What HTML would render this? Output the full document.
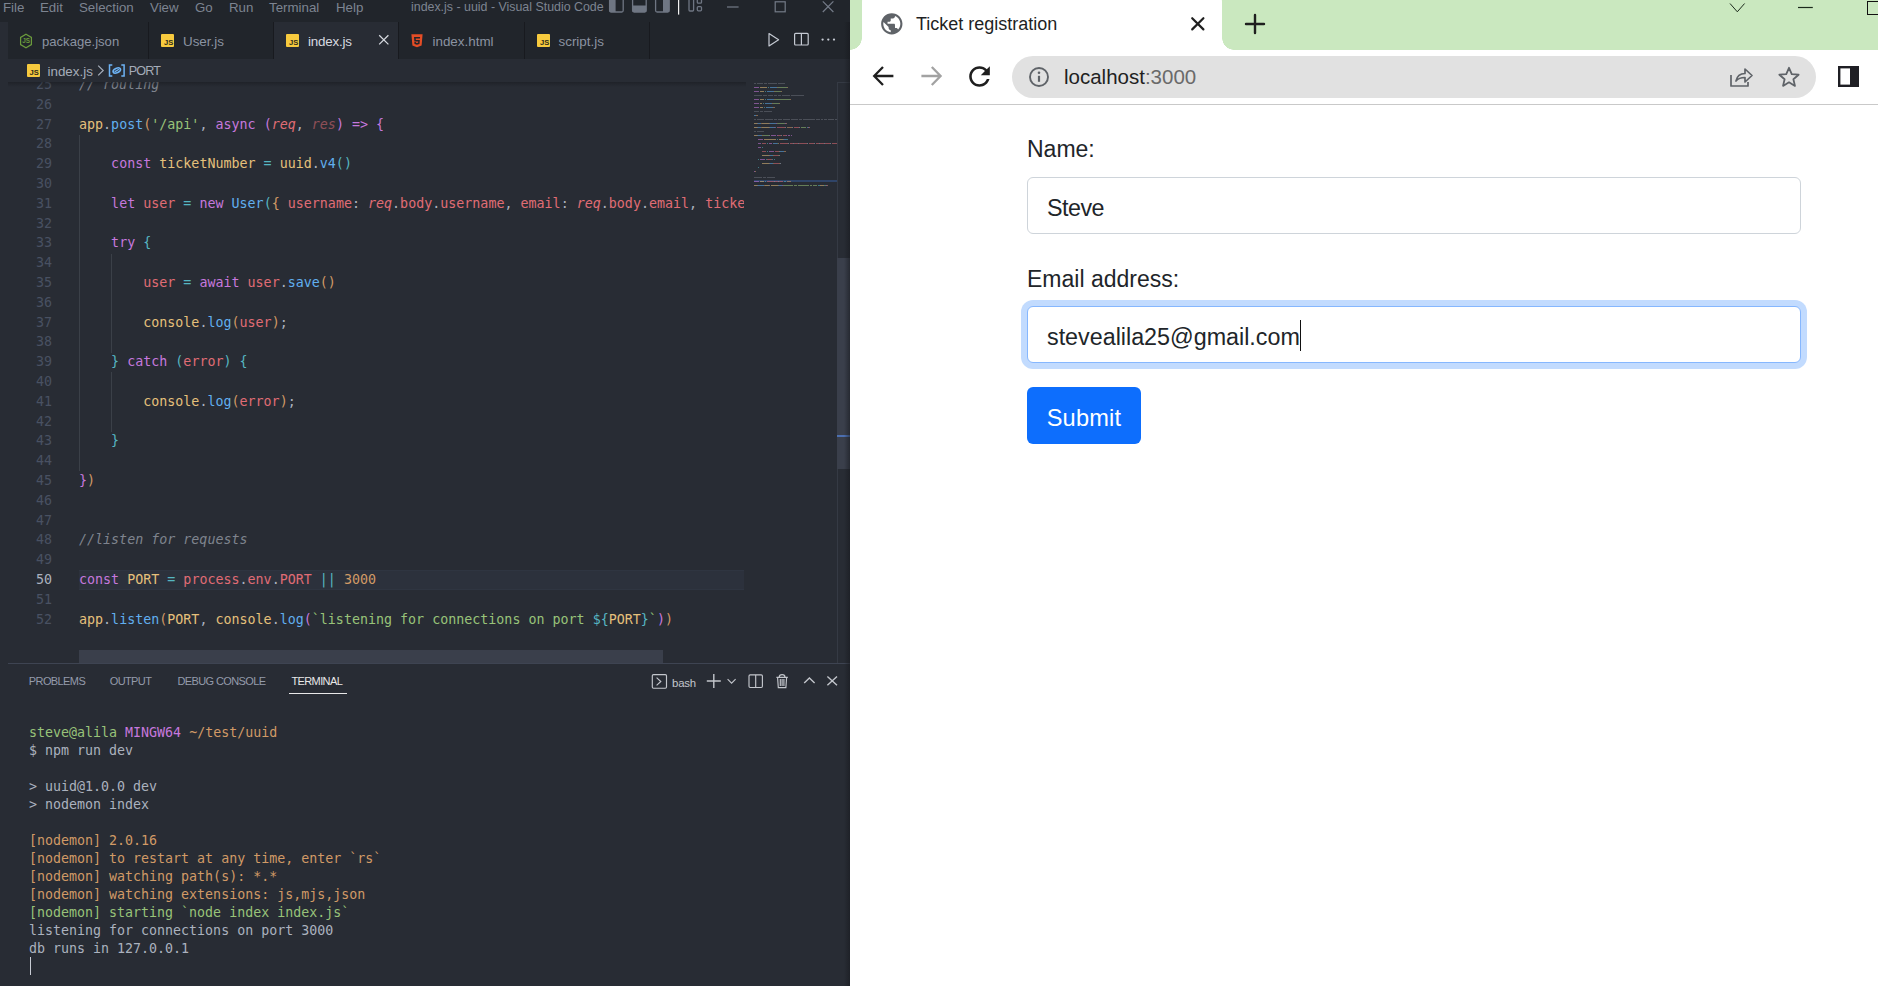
<!DOCTYPE html>
<html lang="en">
<head>
<meta charset="utf-8">
<title>Ticket registration</title>
<style>
*{box-sizing:border-box;margin:0;padding:0}
html,body{width:1878px;height:986px;overflow:hidden;background:#fff}
body{position:relative;font-family:"Liberation Sans",sans-serif}
.abs{position:absolute}
/* ---------- VS Code ---------- */
#vsc{position:absolute;left:0;top:0;width:850px;height:986px;background:#282c34;overflow:hidden;color:#abb2bf}
#titlebar{position:absolute;left:0;top:0;width:850px;height:22px;background:#21252b}
#titlebar .mi{position:absolute;top:0px;font-size:13.3px;line-height:16px;color:#7d8491;white-space:nowrap}
#wtitle{position:absolute;left:411px;top:-1px;font-size:12.4px;line-height:16px;color:#7d8491;white-space:nowrap}
#tabs{position:absolute;left:8px;top:22px;width:842px;height:37px;background:#21252b}
.tab{position:absolute;top:0;height:37px;border-right:1px solid #181a1f;font-size:13.4px;color:#8b93a1;white-space:nowrap}
.tab.active{background:#282c34;color:#d7dae0}
.tab .lbl{position:absolute;top:10.6px;line-height:17px}
.jsic{position:absolute;width:13px;height:13px;background:#f7ca3e;border-radius:1px;overflow:hidden}
.jsic span{position:absolute;right:1px;bottom:-0.2px;font-size:7.6px;line-height:8px;font-weight:bold;color:#2e2a1c;letter-spacing:-0.2px}
#crumbs{position:absolute;left:8px;top:59px;width:842px;height:23px;background:#282c34;font-size:13.4px;color:#a5acb9;white-space:nowrap}
/* editor */
#editor{position:absolute;left:8px;top:82px;width:842px;height:581px;overflow:hidden;background:#282c34}
.ln{position:absolute;left:0;width:44px;text-align:right;height:19.8px;line-height:19.8px;color:#495162;font-family:"DejaVu Sans Mono","Liberation Mono",monospace;font-size:13.34px;white-space:pre}
.cl{position:absolute;left:71px;height:19.8px;line-height:19.8px;font-family:"DejaVu Sans Mono","Liberation Mono",monospace;font-size:13.34px;white-space:pre;color:#abb2bf}
.k{color:#c678dd}.v{color:#e5c07b}.f{color:#61afef}.s{color:#98c379}.r{color:#e06c75}.o{color:#56b6c2}.n{color:#d19a66}
.c{color:#7f848e;font-style:italic}.i{font-style:italic}
.b1{color:#d19a66}.b2{color:#c678dd}.b3{color:#56b6c2}
.guide{position:absolute;width:1px;background:#3b4048}
/* panel */
#panel{position:absolute;left:8px;top:663px;width:842px;height:323px;background:#282c34;border-top:1px solid #3e4452}
.pt{position:absolute;top:10.4px;font-size:11px;line-height:14px;letter-spacing:-0.6px;color:#949bab;white-space:nowrap}
.tl{position:absolute;left:21px;height:18px;line-height:18px;font-family:"DejaVu Sans Mono","Liberation Mono",monospace;font-size:13.3px;white-space:pre;color:#abb2bf}
.tg{color:#98c379}.tm{color:#c678dd}.ty{color:#d19a66}
/* ---------- Chrome ---------- */
#chrome{position:absolute;left:850px;top:0;width:1028px;height:986px;background:#fff;overflow:hidden}
#strip{position:absolute;left:0;top:0;width:1028px;height:50px;background:#cae8bf;z-index:2}
#ctab{position:absolute;left:12px;top:-10px;width:360px;height:60px;background:#fff;border-radius:12px 12px 0 0}
#ctab:before,#ctab:after{content:"";position:absolute;bottom:0;width:12px;height:12px}
#ctab:before{left:-12px;background:radial-gradient(circle at 0 0,rgba(255,255,255,0) 11.5px,#fff 12px)}
#ctab:after{right:-12px;background:radial-gradient(circle at 100% 0,rgba(255,255,255,0) 11.5px,#fff 12px)}
#ctitle{position:absolute;left:54px;top:23px;font-size:18px;line-height:22px;color:#1f1f24;white-space:nowrap}
#toolbar{position:absolute;left:0;top:49px;width:1028px;height:56px;background:#fff;border-bottom:1px solid #c9c9c9}
#omni{position:absolute;left:162px;top:7px;width:804px;height:42px;border-radius:21px;background:#e1e1e1}
#url{position:absolute;left:52px;top:8px;font-size:20.5px;line-height:26px;color:#1f1f1f;white-space:nowrap}
#url span{color:#6a6a6a}
/* page */
#page{position:absolute;left:0;top:105px;width:1028px;height:881px;background:#fff;color:#212529}
.lab{position:absolute;left:177px;font-size:23px;line-height:28px;white-space:nowrap}
.inp{position:absolute;left:177px;width:774px;height:57px;border:1px solid #ced4da;border-radius:6px;background:#fff;font-size:23.3px;line-height:60px;padding-left:19px;white-space:nowrap}
.inp.focus{border-color:#86b7fe;box-shadow:0 0 0 6px rgba(13,110,253,.25)}
#btn{position:absolute;left:177px;top:282px;width:114px;height:57px;border-radius:6px;background:#0d6efd;color:#fff;font-size:23.6px;line-height:62px;text-align:center;letter-spacing:0.2px}
</style>
</head>
<body>
<div id="vsc">
  <div id="titlebar">
    <span class="mi" style="left:3px">File</span>
    <span class="mi" style="left:40px">Edit</span>
    <span class="mi" style="left:79px">Selection</span>
    <span class="mi" style="left:150px">View</span>
    <span class="mi" style="left:195px">Go</span>
    <span class="mi" style="left:229px">Run</span>
    <span class="mi" style="left:269px">Terminal</span>
    <span class="mi" style="left:336px">Help</span>
    <span id="wtitle">index.js - uuid - Visual Studio Code</span>
    <svg class="abs" style="left:606px;top:0" width="244" height="22" viewBox="0 0 244 22">
      <g fill="none" stroke="#6f7683" stroke-width="1.3">
        <rect x="3.6" y="-3" width="13.6" height="15" rx="1.5"/>
        <rect x="26.6" y="-3" width="13.6" height="15" rx="1.5"/>
        <rect x="49.6" y="-3" width="13.6" height="15" rx="1.5"/>
        <rect x="83" y="-3" width="4.6" height="14" rx="1"/>
        <rect x="91.3" y="-1" width="4.2" height="4.2" rx="1"/>
        <rect x="91.3" y="6.6" width="4.2" height="4.2" rx="1"/>
      </g>
      <g fill="#6f7683">
        <rect x="3.6" y="-3" width="6" height="15"/>
        <rect x="26.6" y="5.5" width="13.6" height="6.5"/>
        <rect x="57" y="-3" width="6.2" height="15"/>
      </g>
      <rect x="72" y="0" width="1.2" height="14.6" fill="#f2f2f2"/>
      <g fill="none" stroke="#747b88" stroke-width="1.2">
        <path d="M121 7h11.6"/>
        <rect x="169.2" y="1.8" width="10" height="10"/>
        <path d="M216.8 1.4l10.6 10.6M227.4 1.4l-10.6 10.6"/>
      </g>
    </svg>
  </div>
  <div id="tabs">
    <div class="tab" style="left:0;width:141px">
      <svg class="abs" style="left:11px;top:10.5px" width="14" height="16" viewBox="0 0 14 16"><path d="M7 1.300l5.400 3.100v7.200L7 14.700l-5.400-3.100V4.400z" fill="none" stroke="#6a9a3c" stroke-width="1.250"/><text x="7.100" y="10.300" font-size="6.400" font-weight="bold" font-family="Liberation Sans,sans-serif" text-anchor="middle" fill="#6a9a3c">JS</text></svg>
      <span class="lbl" style="left:34px;font-size:13.1px">package.json</span>
    </div>
    <div class="tab" style="left:141px;width:125px">
      <div class="jsic" style="left:12px;top:12px"><span>JS</span></div>
      <span class="lbl" style="left:34px">User.js</span>
    </div>
    <div class="tab active" style="left:266px;width:125px">
      <div class="jsic" style="left:12px;top:12px"><span>JS</span></div>
      <span class="lbl" style="left:34px;letter-spacing:-0.2px">index.js</span>
      <svg class="abs" style="left:104px;top:11.700px" width="12" height="12" viewBox="0 0 12 12"><path d="M1.2 1.2l9.2 9.2M10.4 1.2l-9.2 9.2" stroke="#d7dae0" stroke-width="1.25" fill="none"/></svg>
    </div>
    <div class="tab" style="left:391px;width:126px">
      <svg class="abs" style="left:12px;top:11.500px" width="12" height="14" viewBox="0 0 12 14"><path d="M0.4 0.3h11.2l-1 11.3L6 13.3 1.4 11.6z" fill="#e44d26"/><path d="M3 2.9h6.1l-.15 1.6H4.7l.12 1.5h4l-.33 3.9L6 10.7l-2.5-.8-.15-1.9h1.5l.08.8L6 9.1l1.08-.3.12-1.4H3.4z" fill="#21252b"/></svg>
      <span class="lbl" style="left:33.500px">index.html</span>
    </div>
    <div class="tab" style="left:517px;width:125px">
      <div class="jsic" style="left:12px;top:12px"><span>JS</span></div>
      <span class="lbl" style="left:33.500px">script.js</span>
    </div>
    <svg class="abs" style="left:756px;top:9px" width="80" height="20" viewBox="0 0 80 20">
      <g fill="none" stroke="#c5cad3" stroke-width="1.2" stroke-linejoin="round">
        <path d="M5 2.6v12.4l9.6-6.2z"/>
        <rect x="30.6" y="2.4" width="13.6" height="11.6" rx="1"/>
        <path d="M37.4 2.4v11.6"/>
      </g>
      <g fill="#c5cad3"><circle cx="58.6" cy="8.6" r="1.15"/><circle cx="64.3" cy="8.6" r="1.15"/><circle cx="70" cy="8.6" r="1.15"/></g>
    </svg>
  </div>
  <div id="crumbs">
    <div class="jsic" style="left:18.5px;top:4.5px"><span>JS</span></div>
    <span class="abs" style="left:39.5px;top:3.5px;line-height:17px">index.js</span>
    <svg class="abs" style="left:87.6px;top:5px" width="10" height="13" viewBox="0 0 10 13"><path d="M2.2 1.6l5 4.9-5 4.9" fill="none" stroke="#a5acb9" stroke-width="1.2"/></svg>
    <svg class="abs" style="left:100px;top:4.500px" width="18" height="13" viewBox="0 0 18 13"><g fill="none" stroke="#6db3f5" stroke-width="1.500"><path d="M4.300 1.100H1.500v10.800h2.800M13.300 1.100h2.800v10.800h-2.800"/><ellipse cx="8.800" cy="6.500" rx="3.900" ry="2.300" transform="rotate(-24 8.800 6.500)" stroke-width="1.600"/><path d="M6.600 7.900l4.400-2.700" stroke-width="1.300"/></g></svg>
    <span class="abs" style="left:120.7px;top:3.5px;line-height:17px;font-size:12.6px;letter-spacing:-0.85px">PORT</span>
  </div>
  <div id="editor"><!--ED-->
<div class="abs" style="left:0;top:0;width:736px;height:581px;overflow:hidden">
<div class="abs" style="left:71px;top:488.1px;width:665px;height:19.8px;background:#2c313c;border-top:1px solid #2f3541;border-bottom:1px solid #2f3541"></div>
<div class="guide" style="left:71px;top:52.7px;height:336.6px;background:#3b4048"></div>
<div class="guide" style="left:103px;top:171.5px;height:99.0px;background:#3b4048"></div>
<div class="guide" style="left:103px;top:290.3px;height:59.4px;background:#3b4048"></div>
<div class="ln" style="top:-7.0px">25</div>
<div class="cl" style="top:-7.0px"><span class="c">// routing</span></div>
<div class="ln" style="top:12.8px">26</div>
<div class="ln" style="top:32.6px">27</div>
<div class="cl" style="top:32.6px"><span class="v">app</span>.<span class="f">post</span><span class="b1">(</span><span class="s">'/api'</span>, <span class="k">async</span> <span class="b2">(</span><span class="r i">req</span>, <span class="r i" style="opacity:.55">res</span><span class="b2">)</span> <span class="k">=&gt;</span> <span class="b2">{</span></div>
<div class="ln" style="top:52.4px">28</div>
<div class="ln" style="top:72.2px">29</div>
<div class="cl" style="top:72.2px">    <span class="k">const</span> <span class="v">ticketNumber</span> <span class="o">=</span> <span class="v">uuid</span>.<span class="f">v4</span><span class="b3">()</span></div>
<div class="ln" style="top:92.0px">30</div>
<div class="ln" style="top:111.8px">31</div>
<div class="cl" style="top:111.8px">    <span class="k">let</span> <span class="r">user</span> <span class="o">=</span> <span class="k">new</span> <span class="f">User</span><span class="b3">(</span><span class="b1">{</span> <span class="r">username</span>: <span class="r i">req</span>.<span class="r">body</span>.<span class="r">username</span>, <span class="r">email</span>: <span class="r i">req</span>.<span class="r">body</span>.<span class="r">email</span>, <span class="r">ticketNumber</span>: <span class="v">ticketNumber</span> <span class="b1">}</span><span class="b3">)</span></div>
<div class="ln" style="top:131.6px">32</div>
<div class="ln" style="top:151.4px">33</div>
<div class="cl" style="top:151.4px">    <span class="k">try</span> <span class="b3">{</span></div>
<div class="ln" style="top:171.2px">34</div>
<div class="ln" style="top:191.0px">35</div>
<div class="cl" style="top:191.0px">        <span class="r">user</span> <span class="o">=</span> <span class="k">await</span> <span class="r">user</span>.<span class="f">save</span><span class="b1">()</span></div>
<div class="ln" style="top:210.8px">36</div>
<div class="ln" style="top:230.6px">37</div>
<div class="cl" style="top:230.6px">        <span class="v">console</span>.<span class="f">log</span><span class="b1">(</span><span class="r">user</span><span class="b1">)</span>;</div>
<div class="ln" style="top:250.4px">38</div>
<div class="ln" style="top:270.2px">39</div>
<div class="cl" style="top:270.2px">    <span class="b3">}</span> <span class="k">catch</span> <span class="b3">(</span><span class="r">error</span><span class="b3">)</span> <span class="b3">{</span></div>
<div class="ln" style="top:290.0px">40</div>
<div class="ln" style="top:309.8px">41</div>
<div class="cl" style="top:309.8px">        <span class="v">console</span>.<span class="f">log</span><span class="b1">(</span><span class="r">error</span><span class="b1">)</span>;</div>
<div class="ln" style="top:329.6px">42</div>
<div class="ln" style="top:349.4px">43</div>
<div class="cl" style="top:349.4px">    <span class="b3">}</span></div>
<div class="ln" style="top:369.2px">44</div>
<div class="ln" style="top:389.0px">45</div>
<div class="cl" style="top:389.0px"><span class="b2">}</span><span class="b1">)</span></div>
<div class="ln" style="top:408.8px">46</div>
<div class="ln" style="top:428.6px">47</div>
<div class="ln" style="top:448.4px">48</div>
<div class="cl" style="top:448.4px"><span class="c">//listen for requests</span></div>
<div class="ln" style="top:468.2px">49</div>
<div class="ln" style="top:488.0px;color:#abb2bf">50</div>
<div class="cl" style="top:488.0px"><span class="k">const</span> <span class="v">PORT</span> <span class="o">=</span> <span class="r">process</span>.<span class="r">env</span>.<span class="r">PORT</span> <span class="o">||</span> <span class="n">3000</span></div>
<div class="ln" style="top:507.8px">51</div>
<div class="ln" style="top:527.6px">52</div>
<div class="cl" style="top:527.6px"><span class="v">app</span>.<span class="f">listen</span><span class="b1">(</span><span class="v">PORT</span>, <span class="v">console</span>.<span class="f">log</span><span class="b2">(</span><span class="s">`listening for connections on port </span><span class="o">${</span><span class="v">PORT</span><span class="o">}</span><span class="s">`</span><span class="b2">)</span><span class="b1">)</span></div>
<div class="abs" style="left:71px;top:568px;width:584px;height:13px;background:#3a3f4b"></div>
</div>
<div class="abs" style="left:0;top:0;width:738px;height:5px;background:linear-gradient(rgba(20,22,27,.45),rgba(20,22,27,0))"></div>
<svg class="abs" style="left:746px;top:0" width="84" height="120" viewBox="0 0 84 120" shape-rendering="crispEdges"><rect x="0" y="98.4" width="84" height="1.6" fill="#2f4468"/><rect x="0" y="0.7" width="2" height="1.5" fill="#7f848e" opacity="0.4"/><rect x="3" y="0.7" width="6" height="1.5" fill="#7f848e" opacity="0.4"/><rect x="10" y="0.7" width="3" height="1.5" fill="#7f848e" opacity="0.4"/><rect x="14" y="0.7" width="9" height="1.5" fill="#7f848e" opacity="0.4"/><rect x="24" y="0.7" width="7" height="1.5" fill="#7f848e" opacity="0.4"/><rect x="0" y="4.7" width="5" height="1.5" fill="#c678dd" opacity="0.55"/><rect x="6" y="4.7" width="7" height="1.5" fill="#e5c07b" opacity="0.55"/><rect x="14" y="4.7" width="1" height="1.5" fill="#56b6c2" opacity="0.55"/><rect x="16" y="4.7" width="7" height="1.5" fill="#61afef" opacity="0.55"/><rect x="23" y="4.7" width="1" height="1.5" fill="#d19a66" opacity="0.55"/><rect x="24" y="4.7" width="9" height="1.5" fill="#98c379" opacity="0.55"/><rect x="33" y="4.7" width="1" height="1.5" fill="#d19a66" opacity="0.55"/><rect x="0" y="8.7" width="5" height="1.5" fill="#c678dd" opacity="0.55"/><rect x="6" y="8.7" width="4" height="1.5" fill="#e5c07b" opacity="0.55"/><rect x="11" y="8.7" width="1" height="1.5" fill="#56b6c2" opacity="0.55"/><rect x="13" y="8.7" width="7" height="1.5" fill="#61afef" opacity="0.55"/><rect x="20" y="8.7" width="1" height="1.5" fill="#d19a66" opacity="0.55"/><rect x="21" y="8.7" width="6" height="1.5" fill="#98c379" opacity="0.55"/><rect x="27" y="8.7" width="1" height="1.5" fill="#d19a66" opacity="0.55"/><rect x="0" y="12.7" width="8" height="1.5" fill="#7f848e" opacity="0.4"/><rect x="9" y="12.7" width="4" height="1.5" fill="#7f848e" opacity="0.4"/><rect x="14" y="12.7" width="5" height="1.5" fill="#7f848e" opacity="0.4"/><rect x="20" y="12.7" width="3" height="1.5" fill="#7f848e" opacity="0.4"/><rect x="24" y="12.7" width="3" height="1.5" fill="#7f848e" opacity="0.4"/><rect x="28" y="12.7" width="8" height="1.5" fill="#7f848e" opacity="0.4"/><rect x="37" y="12.7" width="13" height="1.5" fill="#7f848e" opacity="0.4"/><rect x="0" y="16.7" width="5" height="1.5" fill="#c678dd" opacity="0.55"/><rect x="6" y="16.7" width="4" height="1.5" fill="#e5c07b" opacity="0.55"/><rect x="11" y="16.7" width="1" height="1.5" fill="#56b6c2" opacity="0.55"/><rect x="13" y="16.7" width="7" height="1.5" fill="#61afef" opacity="0.55"/><rect x="20" y="16.7" width="1" height="1.5" fill="#d19a66" opacity="0.55"/><rect x="21" y="16.7" width="15" height="1.5" fill="#98c379" opacity="0.55"/><rect x="36" y="16.7" width="1" height="1.5" fill="#d19a66" opacity="0.55"/><rect x="0" y="20.7" width="5" height="1.5" fill="#c678dd" opacity="0.55"/><rect x="6" y="20.7" width="2" height="1.5" fill="#e5c07b" opacity="0.55"/><rect x="9" y="20.7" width="1" height="1.5" fill="#56b6c2" opacity="0.55"/><rect x="11" y="20.7" width="7" height="1.5" fill="#61afef" opacity="0.55"/><rect x="18" y="20.7" width="1" height="1.5" fill="#d19a66" opacity="0.55"/><rect x="19" y="20.7" width="6" height="1.5" fill="#98c379" opacity="0.55"/><rect x="25" y="20.7" width="1" height="1.5" fill="#d19a66" opacity="0.55"/><rect x="0" y="24.7" width="5" height="1.5" fill="#c678dd" opacity="0.55"/><rect x="6" y="24.7" width="3" height="1.5" fill="#e5c07b" opacity="0.55"/><rect x="10" y="24.7" width="1" height="1.5" fill="#56b6c2" opacity="0.55"/><rect x="12" y="24.7" width="7" height="1.5" fill="#61afef" opacity="0.55"/><rect x="19" y="24.7" width="2" height="1.5" fill="#d19a66" opacity="0.55"/><rect x="0" y="28.7" width="5" height="1.5" fill="#7f848e" opacity="0.4"/><rect x="6" y="28.7" width="3" height="1.5" fill="#7f848e" opacity="0.4"/><rect x="10" y="28.7" width="8" height="1.5" fill="#7f848e" opacity="0.4"/><rect x="0" y="32.7" width="2" height="1.5" fill="#61afef" opacity="0.55"/><rect x="2" y="32.7" width="2" height="1.5" fill="#d19a66" opacity="0.55"/><rect x="0" y="36.7" width="2" height="1.5" fill="#7f848e" opacity="0.4"/><rect x="3" y="36.7" width="7" height="1.5" fill="#7f848e" opacity="0.4"/><rect x="11" y="36.7" width="8" height="1.5" fill="#7f848e" opacity="0.4"/><rect x="20" y="36.7" width="3" height="1.5" fill="#7f848e" opacity="0.4"/><rect x="24" y="36.7" width="4" height="1.5" fill="#7f848e" opacity="0.4"/><rect x="29" y="36.7" width="7" height="1.5" fill="#7f848e" opacity="0.4"/><rect x="37" y="36.7" width="7" height="1.5" fill="#7f848e" opacity="0.4"/><rect x="45" y="36.7" width="3" height="1.5" fill="#7f848e" opacity="0.4"/><rect x="49" y="36.7" width="12" height="1.5" fill="#7f848e" opacity="0.4"/><rect x="62" y="36.7" width="4" height="1.5" fill="#7f848e" opacity="0.4"/><rect x="67" y="36.7" width="2" height="1.5" fill="#7f848e" opacity="0.4"/><rect x="70" y="36.7" width="3" height="1.5" fill="#7f848e" opacity="0.4"/><rect x="74" y="36.7" width="6" height="1.5" fill="#7f848e" opacity="0.4"/><rect x="81" y="36.7" width="2" height="1.5" fill="#7f848e" opacity="0.4"/><rect x="0" y="40.7" width="3" height="1.5" fill="#e5c07b" opacity="0.55"/><rect x="3" y="40.7" width="1" height="1.5" fill="#abb2bf" opacity="0.55"/><rect x="4" y="40.7" width="3" height="1.5" fill="#61afef" opacity="0.55"/><rect x="7" y="40.7" width="1" height="1.5" fill="#d19a66" opacity="0.55"/><rect x="8" y="40.7" width="7" height="1.5" fill="#e5c07b" opacity="0.55"/><rect x="15" y="40.7" width="1" height="1.5" fill="#abb2bf" opacity="0.55"/><rect x="16" y="40.7" width="6" height="1.5" fill="#61afef" opacity="0.55"/><rect x="22" y="40.7" width="1" height="1.5" fill="#c678dd" opacity="0.55"/><rect x="23" y="40.7" width="8" height="1.5" fill="#98c379" opacity="0.55"/><rect x="31" y="40.7" width="1" height="1.5" fill="#c678dd" opacity="0.55"/><rect x="32" y="40.7" width="1" height="1.5" fill="#d19a66" opacity="0.55"/><rect x="0" y="44.7" width="3" height="1.5" fill="#e5c07b" opacity="0.55"/><rect x="3" y="44.7" width="1" height="1.5" fill="#abb2bf" opacity="0.55"/><rect x="4" y="44.7" width="3" height="1.5" fill="#61afef" opacity="0.55"/><rect x="7" y="44.7" width="1" height="1.5" fill="#d19a66" opacity="0.55"/><rect x="8" y="44.7" width="7" height="1.5" fill="#e5c07b" opacity="0.55"/><rect x="15" y="44.7" width="1" height="1.5" fill="#abb2bf" opacity="0.55"/><rect x="16" y="44.7" width="4" height="1.5" fill="#61afef" opacity="0.55"/><rect x="20" y="44.7" width="1" height="1.5" fill="#c678dd" opacity="0.55"/><rect x="21" y="44.7" width="1" height="1.5" fill="#56b6c2" opacity="0.55"/><rect x="23" y="44.7" width="8" height="1.5" fill="#e06c75" opacity="0.55"/><rect x="31" y="44.7" width="1" height="1.5" fill="#abb2bf" opacity="0.55"/><rect x="33" y="44.7" width="5" height="1.5" fill="#d19a66" opacity="0.55"/><rect x="38" y="44.7" width="1" height="1.5" fill="#abb2bf" opacity="0.55"/><rect x="40" y="44.7" width="5" height="1.5" fill="#e06c75" opacity="0.55"/><rect x="45" y="44.7" width="1" height="1.5" fill="#abb2bf" opacity="0.55"/><rect x="47" y="44.7" width="5" height="1.5" fill="#98c379" opacity="0.55"/><rect x="53" y="44.7" width="1" height="1.5" fill="#56b6c2" opacity="0.55"/><rect x="54" y="44.7" width="1" height="1.5" fill="#c678dd" opacity="0.55"/><rect x="55" y="44.7" width="1" height="1.5" fill="#d19a66" opacity="0.55"/><rect x="0" y="48.7" width="2" height="1.5" fill="#7f848e" opacity="0.4"/><rect x="3" y="48.7" width="7" height="1.5" fill="#7f848e" opacity="0.4"/><rect x="0" y="52.7" width="3" height="1.5" fill="#e5c07b" opacity="0.55"/><rect x="3" y="52.7" width="1" height="1.5" fill="#abb2bf" opacity="0.55"/><rect x="4" y="52.7" width="4" height="1.5" fill="#61afef" opacity="0.55"/><rect x="8" y="52.7" width="1" height="1.5" fill="#d19a66" opacity="0.55"/><rect x="9" y="52.7" width="6" height="1.5" fill="#98c379" opacity="0.55"/><rect x="15" y="52.7" width="1" height="1.5" fill="#abb2bf" opacity="0.55"/><rect x="17" y="52.7" width="5" height="1.5" fill="#c678dd" opacity="0.55"/><rect x="23" y="52.7" width="1" height="1.5" fill="#c678dd" opacity="0.55"/><rect x="24" y="52.7" width="3" height="1.5" fill="#e06c75" opacity="0.55"/><rect x="27" y="52.7" width="1" height="1.5" fill="#abb2bf" opacity="0.55"/><rect x="29" y="52.7" width="3" height="1.5" fill="#e06c75" opacity="0.55"/><rect x="32" y="52.7" width="1" height="1.5" fill="#c678dd" opacity="0.55"/><rect x="34" y="52.7" width="2" height="1.5" fill="#c678dd" opacity="0.55"/><rect x="37" y="52.7" width="1" height="1.5" fill="#c678dd" opacity="0.55"/><rect x="4" y="56.7" width="5" height="1.5" fill="#c678dd" opacity="0.55"/><rect x="10" y="56.7" width="12" height="1.5" fill="#e5c07b" opacity="0.55"/><rect x="23" y="56.7" width="1" height="1.5" fill="#56b6c2" opacity="0.55"/><rect x="25" y="56.7" width="4" height="1.5" fill="#e5c07b" opacity="0.55"/><rect x="29" y="56.7" width="1" height="1.5" fill="#abb2bf" opacity="0.55"/><rect x="30" y="56.7" width="2" height="1.5" fill="#61afef" opacity="0.55"/><rect x="32" y="56.7" width="2" height="1.5" fill="#56b6c2" opacity="0.55"/><rect x="4" y="60.7" width="3" height="1.5" fill="#c678dd" opacity="0.55"/><rect x="8" y="60.7" width="4" height="1.5" fill="#e06c75" opacity="0.55"/><rect x="13" y="60.7" width="1" height="1.5" fill="#56b6c2" opacity="0.55"/><rect x="15" y="60.7" width="3" height="1.5" fill="#c678dd" opacity="0.55"/><rect x="19" y="60.7" width="4" height="1.5" fill="#61afef" opacity="0.55"/><rect x="23" y="60.7" width="1" height="1.5" fill="#56b6c2" opacity="0.55"/><rect x="24" y="60.7" width="1" height="1.5" fill="#d19a66" opacity="0.55"/><rect x="26" y="60.7" width="8" height="1.5" fill="#e06c75" opacity="0.55"/><rect x="34" y="60.7" width="1" height="1.5" fill="#abb2bf" opacity="0.55"/><rect x="36" y="60.7" width="3" height="1.5" fill="#e06c75" opacity="0.55"/><rect x="39" y="60.7" width="1" height="1.5" fill="#abb2bf" opacity="0.55"/><rect x="40" y="60.7" width="4" height="1.5" fill="#e06c75" opacity="0.55"/><rect x="44" y="60.7" width="1" height="1.5" fill="#abb2bf" opacity="0.55"/><rect x="45" y="60.7" width="8" height="1.5" fill="#e06c75" opacity="0.55"/><rect x="53" y="60.7" width="1" height="1.5" fill="#abb2bf" opacity="0.55"/><rect x="55" y="60.7" width="5" height="1.5" fill="#e06c75" opacity="0.55"/><rect x="60" y="60.7" width="1" height="1.5" fill="#abb2bf" opacity="0.55"/><rect x="62" y="60.7" width="3" height="1.5" fill="#e06c75" opacity="0.55"/><rect x="65" y="60.7" width="1" height="1.5" fill="#abb2bf" opacity="0.55"/><rect x="66" y="60.7" width="4" height="1.5" fill="#e06c75" opacity="0.55"/><rect x="70" y="60.7" width="1" height="1.5" fill="#abb2bf" opacity="0.55"/><rect x="71" y="60.7" width="5" height="1.5" fill="#e06c75" opacity="0.55"/><rect x="76" y="60.7" width="1" height="1.5" fill="#abb2bf" opacity="0.55"/><rect x="78" y="60.7" width="5" height="1.5" fill="#e06c75" opacity="0.55"/><rect x="4" y="64.7" width="3" height="1.5" fill="#c678dd" opacity="0.55"/><rect x="8" y="64.7" width="1" height="1.5" fill="#56b6c2" opacity="0.55"/><rect x="8" y="68.7" width="4" height="1.5" fill="#e06c75" opacity="0.55"/><rect x="13" y="68.7" width="1" height="1.5" fill="#56b6c2" opacity="0.55"/><rect x="15" y="68.7" width="5" height="1.5" fill="#c678dd" opacity="0.55"/><rect x="21" y="68.7" width="4" height="1.5" fill="#e06c75" opacity="0.55"/><rect x="25" y="68.7" width="1" height="1.5" fill="#abb2bf" opacity="0.55"/><rect x="26" y="68.7" width="4" height="1.5" fill="#61afef" opacity="0.55"/><rect x="30" y="68.7" width="2" height="1.5" fill="#d19a66" opacity="0.55"/><rect x="8" y="72.7" width="7" height="1.5" fill="#e5c07b" opacity="0.55"/><rect x="15" y="72.7" width="1" height="1.5" fill="#abb2bf" opacity="0.55"/><rect x="16" y="72.7" width="3" height="1.5" fill="#61afef" opacity="0.55"/><rect x="19" y="72.7" width="1" height="1.5" fill="#d19a66" opacity="0.55"/><rect x="20" y="72.7" width="4" height="1.5" fill="#e06c75" opacity="0.55"/><rect x="24" y="72.7" width="1" height="1.5" fill="#d19a66" opacity="0.55"/><rect x="25" y="72.7" width="1" height="1.5" fill="#abb2bf" opacity="0.55"/><rect x="4" y="76.7" width="1" height="1.5" fill="#56b6c2" opacity="0.55"/><rect x="6" y="76.7" width="5" height="1.5" fill="#c678dd" opacity="0.55"/><rect x="12" y="76.7" width="1" height="1.5" fill="#56b6c2" opacity="0.55"/><rect x="13" y="76.7" width="5" height="1.5" fill="#e06c75" opacity="0.55"/><rect x="18" y="76.7" width="1" height="1.5" fill="#56b6c2" opacity="0.55"/><rect x="20" y="76.7" width="1" height="1.5" fill="#56b6c2" opacity="0.55"/><rect x="8" y="80.7" width="7" height="1.5" fill="#e5c07b" opacity="0.55"/><rect x="15" y="80.7" width="1" height="1.5" fill="#abb2bf" opacity="0.55"/><rect x="16" y="80.7" width="3" height="1.5" fill="#61afef" opacity="0.55"/><rect x="19" y="80.7" width="1" height="1.5" fill="#d19a66" opacity="0.55"/><rect x="20" y="80.7" width="5" height="1.5" fill="#e06c75" opacity="0.55"/><rect x="25" y="80.7" width="1" height="1.5" fill="#d19a66" opacity="0.55"/><rect x="26" y="80.7" width="1" height="1.5" fill="#abb2bf" opacity="0.55"/><rect x="4" y="84.7" width="1" height="1.5" fill="#56b6c2" opacity="0.55"/><rect x="0" y="88.7" width="1" height="1.5" fill="#c678dd" opacity="0.55"/><rect x="1" y="88.7" width="1" height="1.5" fill="#d19a66" opacity="0.55"/><rect x="0" y="94.7" width="8" height="1.5" fill="#7f848e" opacity="0.4"/><rect x="9" y="94.7" width="3" height="1.5" fill="#7f848e" opacity="0.4"/><rect x="13" y="94.7" width="8" height="1.5" fill="#7f848e" opacity="0.4"/><rect x="0" y="98.7" width="5" height="1.5" fill="#c678dd" opacity="0.55"/><rect x="6" y="98.7" width="4" height="1.5" fill="#e5c07b" opacity="0.55"/><rect x="11" y="98.7" width="1" height="1.5" fill="#56b6c2" opacity="0.55"/><rect x="13" y="98.7" width="7" height="1.5" fill="#e06c75" opacity="0.55"/><rect x="20" y="98.7" width="1" height="1.5" fill="#abb2bf" opacity="0.55"/><rect x="21" y="98.7" width="3" height="1.5" fill="#e06c75" opacity="0.55"/><rect x="24" y="98.7" width="1" height="1.5" fill="#abb2bf" opacity="0.55"/><rect x="25" y="98.7" width="4" height="1.5" fill="#e06c75" opacity="0.55"/><rect x="30" y="98.7" width="2" height="1.5" fill="#56b6c2" opacity="0.55"/><rect x="33" y="98.7" width="4" height="1.5" fill="#d19a66" opacity="0.55"/><rect x="0" y="102.7" width="3" height="1.5" fill="#e5c07b" opacity="0.55"/><rect x="3" y="102.7" width="1" height="1.5" fill="#abb2bf" opacity="0.55"/><rect x="4" y="102.7" width="6" height="1.5" fill="#61afef" opacity="0.55"/><rect x="10" y="102.7" width="1" height="1.5" fill="#d19a66" opacity="0.55"/><rect x="11" y="102.7" width="4" height="1.5" fill="#e5c07b" opacity="0.55"/><rect x="15" y="102.7" width="1" height="1.5" fill="#abb2bf" opacity="0.55"/><rect x="17" y="102.7" width="7" height="1.5" fill="#e5c07b" opacity="0.55"/><rect x="24" y="102.7" width="1" height="1.5" fill="#abb2bf" opacity="0.55"/><rect x="25" y="102.7" width="3" height="1.5" fill="#61afef" opacity="0.55"/><rect x="28" y="102.7" width="1" height="1.5" fill="#c678dd" opacity="0.55"/><rect x="29" y="102.7" width="10" height="1.5" fill="#98c379" opacity="0.55"/><rect x="40" y="102.7" width="3" height="1.5" fill="#98c379" opacity="0.55"/><rect x="44" y="102.7" width="11" height="1.5" fill="#98c379" opacity="0.55"/><rect x="56" y="102.7" width="2" height="1.5" fill="#98c379" opacity="0.55"/><rect x="59" y="102.7" width="4" height="1.5" fill="#98c379" opacity="0.55"/><rect x="64" y="102.7" width="2" height="1.5" fill="#56b6c2" opacity="0.55"/><rect x="66" y="102.7" width="4" height="1.5" fill="#e5c07b" opacity="0.55"/><rect x="70" y="102.7" width="1" height="1.5" fill="#56b6c2" opacity="0.55"/><rect x="71" y="102.7" width="1" height="1.5" fill="#98c379" opacity="0.55"/><rect x="72" y="102.7" width="1" height="1.5" fill="#c678dd" opacity="0.55"/><rect x="73" y="102.7" width="1" height="1.5" fill="#d19a66" opacity="0.55"/></svg>
<div class="abs" style="left:829px;top:0;width:13px;height:581px;border-left:1px solid #353a44;border-top:1px solid #353a44"></div>
<div class="abs" style="left:829px;top:176px;width:13px;height:211px;background:#3a3f4b"></div>
<div class="abs" style="left:829px;top:353px;width:13px;height:2px;background:#4c6fb0"></div>
<!--/ED--></div>
  <div id="panel">
    <span class="pt" style="left:20.8px">PROBLEMS</span>
    <span class="pt" style="left:101.7px">OUTPUT</span>
    <span class="pt" style="left:169.4px">DEBUG CONSOLE</span>
    <span class="pt" style="left:283.4px;color:#e8e8e8">TERMINAL</span>
    <div class="abs" style="left:281px;top:28.5px;width:58px;height:1.3px;background:#e8e8e8"></div>
    <svg class="abs" style="left:632px;top:6px" width="210" height="24" viewBox="0 0 210 24">
      <g fill="none" stroke="#c3c6cc" stroke-width="1.15">
        <rect x="12.3" y="4.6" width="14.2" height="13.6" rx="1.2"/>
        <path d="M16.6 7.6l4.2 3.9-4.2 3.9"/>
        <path d="M66.8 11h14M73.8 4v14" stroke-width="1.4"/>
        <path d="M87.6 9.2l4 4 4-4" stroke-width="1.1"/>
        <rect x="109" y="4.9" width="13.4" height="12.6" rx="1.2"/>
        <path d="M115.7 4.9v12.6"/>
        <path d="M136.4 7.4h11.4M139.2 7.2c0-3.4 5.8-3.4 5.8 0M137.6 7.6l.7 10h7.6l.7-10M140.3 9v7M142.1 9v7M143.9 9v7"/>
        <path d="M164.200 12.900l5.200-4.900 5.200 4.900" stroke-width="1.400"/>
        <path d="M187.400 6.600l9.600 8.700M197 6.600l-9.600 8.700" stroke-width="1.400"/>
      </g>
    </svg>
    <span class="abs" style="left:664px;top:11.5px;font-size:11.4px;line-height:14px;color:#c3c6cc;letter-spacing:-0.2px">bash</span>
    <div class="tl" style="top:60px"><span class="tg">steve@alila</span> <span class="tm">MINGW64</span> <span class="ty">~/test/uuid</span></div>
    <div class="tl" style="top:78px">$ npm run dev</div>
    <div class="tl" style="top:114px">&gt; uuid@1.0.0 dev</div>
    <div class="tl" style="top:132px">&gt; nodemon index</div>
    <div class="tl" style="top:168px"><span class="ty">[nodemon] 2.0.16</span></div>
    <div class="tl" style="top:186px"><span class="ty">[nodemon] to restart at any time, enter `rs`</span></div>
    <div class="tl" style="top:204px"><span class="ty">[nodemon] watching path(s): *.*</span></div>
    <div class="tl" style="top:222px"><span class="ty">[nodemon] watching extensions: js,mjs,json</span></div>
    <div class="tl" style="top:240px"><span class="tg">[nodemon] starting `node index index.js`</span></div>
    <div class="tl" style="top:258px">listening for connections on port 3000</div>
    <div class="tl" style="top:276px">db runs in 127.0.0.1</div>
    <div class="abs" style="left:21.5px;top:293px;width:1.2px;height:18px;background:#c8ccd4"></div>
  </div>
  <div class="abs" style="left:844px;top:22px;width:6px;height:964px;background:linear-gradient(to right,rgba(22,24,29,0),rgba(22,24,29,.55))"></div>
</div>
<div id="chrome">
  <div id="strip">
    <div id="ctab">
      <svg class="abs" style="left:17.2px;top:21.2px" width="25.6" height="25.6" viewBox="0 0 24 24"><path fill="#5f6368" d="M12 2C6.48 2 2 6.48 2 12s4.48 10 10 10 10-4.48 10-10S17.52 2 12 2zm-1 17.93c-3.95-.49-7-3.85-7-7.93 0-.62.08-1.21.21-1.79L9 15v1c0 1.1.9 2 2 2v1.930zm6.900-2.540c-.26-.81-1-1.390-1.900-1.390h-1v-3c0-.55-.45-1-1-1H8v-2h2c.55 0 1-.45 1-1V7h2c1.100 0 2-.9 2-2v-.41c2.930 1.190 5 4.060 5 7.410 0 2.080-.8 3.970-2.100 5.390z"/></svg>
      <span id="ctitle">Ticket registration</span>
      <svg class="abs" style="left:327px;top:25px" width="18" height="18" viewBox="0 0 18 18"><path d="M3.2 3.2l11.200 11.200M14.400 3.200L3.200 14.400" stroke="#1f1f1f" stroke-width="2.2" stroke-linecap="round" fill="none"/></svg>
    </div>
    <svg class="abs" style="left:394px;top:13px" width="22" height="22" viewBox="0 0 22 22"><path d="M2 11h18M11 2v18" stroke="#1f1f1f" stroke-width="2.4" stroke-linecap="round" fill="none"/></svg>
    <svg class="abs" style="left:868px;top:0" width="160" height="20" viewBox="0 0 160 20"><g fill="none" stroke="#1c2a1c" stroke-width="1.100"><path d="M12 3.500l7.300 8.300 7.300-8.300" stroke-width="1"/><path d="M80 7.500h14.800" stroke-width="1.200"/><rect x="149.500" y="1.500" width="14" height="13" stroke="#111" stroke-width="1"/></g></svg>
  </div>
  <div id="toolbar">
    <svg class="abs" style="left:22px;top:16px" width="24" height="22" viewBox="0 0 24 22"><path d="M21.4 11H3M11 2L2.200 11l8.800 9" fill="none" stroke="#1f1f1f" stroke-width="2.300"/></svg>
    <svg class="abs" style="left:69.500px;top:16px" width="24" height="22" viewBox="0 0 24 22"><path d="M1.400 11H19.800M11.800 2l8.800 9-8.800 9" fill="none" stroke="#a2a2a2" stroke-width="2.300"/></svg>
    <svg class="abs" style="left:113.500px;top:12px" width="31" height="31" viewBox="0 0 24 24"><path fill="#1f1f1f" d="M17.650 6.350C16.200 4.900 14.210 4 12 4c-4.420 0-7.990 3.580-7.990 8s3.570 8 7.990 8c3.730 0 6.840-2.550 7.730-6h-2.080c-.82 2.330-3.040 4-5.650 4-3.310 0-6-2.690-6-6s2.690-6 6-6c1.660 0 3.140.69 4.220 1.780L13 11h7V4l-2.350 2.350z"/></svg>
    <div id="omni">
      <svg class="abs" style="left:16px;top:10px" width="22" height="22" viewBox="0 0 22 22"><circle cx="11" cy="11" r="9" fill="none" stroke="#5f6368" stroke-width="1.9"/><path d="M11 9.800v6" stroke="#5f6368" stroke-width="2.200"/><circle cx="11" cy="6.700" r="1.300" fill="#5f6368"/></svg>
      <span id="url">localhost<span>:3000</span></span>
      <svg class="abs" style="left:716px;top:9px" width="26" height="24" viewBox="0 0 26 24"><g fill="none" stroke="#5f6368" stroke-width="1.700" stroke-linejoin="round"><path d="M3 10v11h17v-4"/><path d="M8 16c1-5 4-7.500 9-7.500V4l7 6.500-7 6.500v-4.500c-4 0-7 1-9 3.500z"/></g></svg>
      <svg class="abs" style="left:765px;top:9px" width="24" height="24" viewBox="0 0 24 24"><path d="M12 2.800l2.750 6.300 6.850.6-5.200 4.500 1.550 6.700L12 17.350 6.050 20.900l1.550-6.700-5.200-4.500 6.850-.6z" fill="none" stroke="#5f6368" stroke-width="1.800" stroke-linejoin="round"/></svg>
    </div>
    <svg class="abs" style="left:987px;top:16px" width="24" height="24" viewBox="0 0 24 24"><rect x="2.200" y="2.200" width="18.600" height="18.600" fill="none" stroke="#1f1f24" stroke-width="2.400"/><rect x="13" y="2" width="8" height="19" fill="#1f1f24"/></svg>
  </div>
  <div id="page">
    <div class="lab" style="top:30px">Name:</div>
    <div class="inp" style="top:72px;letter-spacing:-0.5px">Steve</div>
    <div class="lab" style="top:160px">Email address:</div>
    <div class="inp focus" style="top:201px">stevealila25@gmail.com<span style="display:inline-block;vertical-align:-6px;width:1.500px;height:31px;background:#111;margin-left:0"></span></div>
    <div id="btn">Submit</div>
  </div>
</div>
</body>
</html>
